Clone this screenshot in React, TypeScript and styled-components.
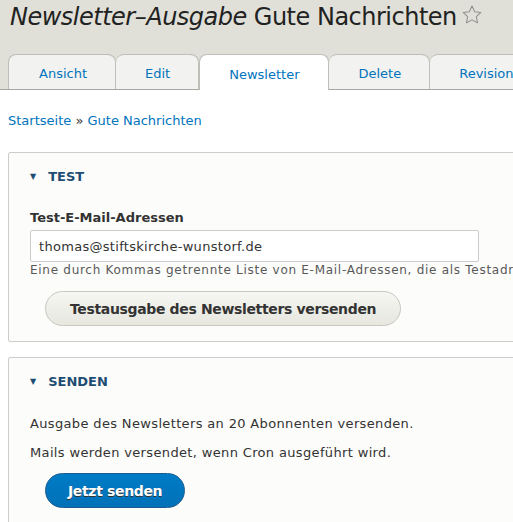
import * as React from 'react'
import styled, { createGlobalStyle } from 'styled-components'

const GlobalStyle = createGlobalStyle`
  html, body {
    margin: 0;
    padding: 0;
    background: #fff;
    overflow: hidden;
  }
  body {
    font-family: 'DejaVu Sans', 'Liberation Sans', sans-serif;
    color: #333;
    font-size: 13px;
  }
`

const tabs = ['Ansicht', 'Edit', 'Newsletter', 'Delete', 'Revisionen']

const App: React.FC = () => {
  return (
    <Page>
      <GlobalStyle />
      <Header>
        <Title>
          <em>Newsletter–Ausgabe</em> Gute Nachrichten
          <Star width="22" height="22" viewBox="0 0 24 24">
            <path
              d="M12 2.2l2.95 6.2 6.75.85-4.95 4.65 1.3 6.7L12 17.3l-6.05 3.3 1.3-6.7L2.3 9.25l6.75-.85z"
              fill="none"
              stroke="#8e8e8a"
              strokeWidth="1.1"
              strokeLinejoin="round"
            />
          </Star>
        </Title>
        <Tabs>
          {tabs.map((t) => (
            <Tab key={t} active={t === 'Newsletter'}>
              {t}
            </Tab>
          ))}
        </Tabs>
      </Header>
      <Content>
        <Breadcrumb>
          <a>Startseite</a> » <a>Gute Nachrichten</a>
        </Breadcrumb>

        <Fieldset>
          <Legend>
            <Arrow>▼</Arrow>TEST
          </Legend>
          <Label>Test-E-Mail-Adressen</Label>
          <Input defaultValue="thomas@stiftskirche-wunstorf.de" />
          <Description>
            Eine durch Kommas getrennte Liste von E-Mail-Adressen, die als
            Testadressen verwendet werden.
          </Description>
          <Button>Testausgabe des Newsletters versenden</Button>
        </Fieldset>

        <Fieldset>
          <Legend>
            <Arrow>▼</Arrow>SENDEN
          </Legend>
          <SendBody>
            <Text>Ausgabe des Newsletters an 20 Abonnenten versenden.</Text>
            <Text>Mails werden versendet, wenn Cron ausgeführt wird.</Text>
            <Button primary>Jetzt senden</Button>
          </SendBody>
        </Fieldset>
      </Content>
    </Page>
  )
}

export default App

const Page = styled.div`
  width: 513px;
  height: 522px;
  overflow: hidden;
`

const Header = styled.div`
  background: #e0e0d8;
  padding-top: 2px;
`

const Title = styled.h1`
  margin: 0;
  padding-left: 10px;
  height: 52px;
  display: flex;
  align-items: flex-start;
  font-size: 24px;
  letter-spacing: -0.5px;
  font-weight: normal;
  line-height: 30px;
  color: #222;
  white-space: nowrap;

  em {
    font-style: italic;
    margin-right: 7px;
  }
`

const Star = styled.svg`
  margin-left: 4px;
  margin-top: 2px;
`

const Tabs = styled.div`
  display: flex;
  padding-left: 8px;
  height: 35px;
  border-bottom: 1px solid #a6a7a2;
  white-space: nowrap;
`

const Tab = styled.div<{ active?: boolean }>`
  display: flex;
  align-items: center;
  padding: 3px 29px 0;
  border: 1px solid #bfbfba;
  border-bottom: none;
  border-left-width: ${(p) => (p.active ? '1px' : '0')};
  border-right-width: ${(p) => (p.active ? '1px' : '0')};
  border-radius: 8px 8px 0 0;
  background: ${(p) => (p.active ? '#fff' : '#f2f2f0')};
  color: #0074bd;
  font-size: 13px;
  margin-bottom: ${(p) => (p.active ? '-1px' : '0')};
  box-shadow: ${(p) => (p.active ? 'none' : 'inset -1px 0 0 #bfbfba')};

  &:first-child {
    border-left-width: 1px;
    padding-left: 30px;
  }
`

const Content = styled.div`
  padding: 22px 8px 0;
`

const Breadcrumb = styled.div`
  color: #333;
  font-size: 13px;
  line-height: 18px;
  margin-bottom: 22px;

  a {
    color: #0074bd;
  }
`

const Fieldset = styled.div`
  width: 560px;
  box-sizing: border-box;
  border: 1px solid #ccc;
  border-radius: 2px;
  background: #fcfcfa;
  padding: 15px 21px 15px;
  margin-bottom: 15px;
`

const Legend = styled.div`
  display: flex;
  align-items: center;
  font-weight: bold;
  font-size: 13px;
  color: #1e4d73;
  line-height: 18px;
  margin-bottom: 23px;
`

const Arrow = styled.span`
  font-size: 8px;
  margin-right: 12px;
  color: #1e4d73;
`

const Label = styled.div`
  font-weight: bold;
  font-size: 13px;
  line-height: 18px;
  margin-bottom: 3px;
`

const Input = styled.input`
  display: block;
  width: 449px;
  height: 32px;
  box-sizing: border-box;
  border: 1px solid #ccc;
  border-radius: 2px;
  padding: 0 8px;
  font-family: inherit;
  font-size: 13px;
  letter-spacing: 0.3px;
  color: #333;
  background: #fff;
`

const Description = styled.div`
  font-size: 12px;
  letter-spacing: 0.72px;
  color: #595959;
  line-height: 17px;
  white-space: nowrap;
`

const SendBody = styled.div`
  display: flex;
  flex-direction: column;
  gap: 11px;
  padding-top: 1px;
`

const Text = styled.p`
  margin: 0;
  font-size: 13px;
  letter-spacing: 0.35px;
  line-height: 18px;
`

const Button = styled.button<{ primary?: boolean }>`
  display: block;
  align-self: flex-start;
  margin: ${(p) => (p.primary ? '0' : '12px')} 0 0 15px;
  height: 35px;
  padding: 0 ${(p) => (p.primary ? '22px' : '24px')};
  border-radius: 20px;
  font-family: inherit;
  font-weight: bold;
  font-size: 14px;
  letter-spacing: -0.35px;
  border: 1px solid ${(p) => (p.primary ? '#1e5c90' : '#c8c8c1')};
  color: ${(p) => (p.primary ? '#fff' : '#333')};
  background: ${(p) =>
    p.primary
      ? 'linear-gradient(#007bc6, #0071b8)'
      : 'linear-gradient(#f6f6f3, #e7e7df)'};
  text-shadow: ${(p) => (p.primary ? '0 1px 0 #333' : 'none')};
`
